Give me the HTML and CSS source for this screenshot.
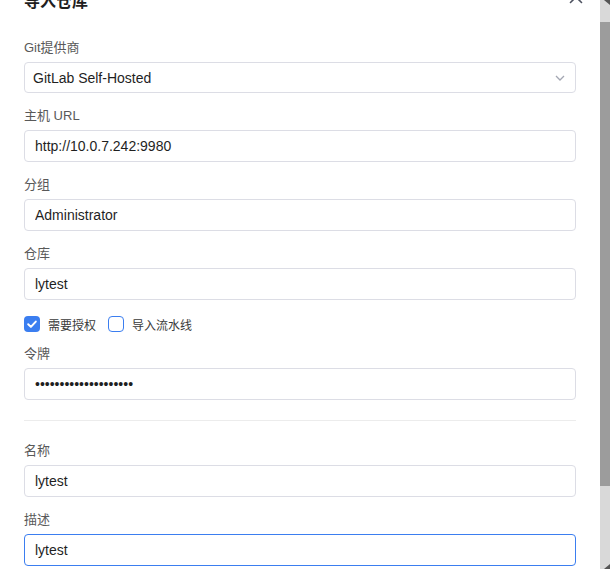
FILE: index.html
```html
<!DOCTYPE html>
<html lang="zh-CN">
<head>
  <meta charset="UTF-8">
  <meta name="viewport" content="width=device-width, initial-scale=1.0">
  <title>导入仓库</title>
  <link rel="stylesheet" href="styles.css">
</head>
<body>
  <div class="screen">
    <div class="dialog">
      <div class="dialog-header">
        <h2>导入仓库</h2>
        <button class="close-btn" type="button" aria-label="关闭">
          <svg width="14" height="14" viewBox="0 0 14 14"><path d="M1.5 1.5 L12.5 12.5 M12.5 1.5 L1.5 12.5" stroke="#4d5260" stroke-width="1.6" stroke-linecap="round" fill="none"/></svg>
        </button>
      </div>

      <form class="form">
        <div class="field">
          <label>Git提供商</label>
          <div class="select">
            <span>GitLab Self-Hosted</span>
            <svg width="12" height="8" viewBox="0 0 12 8"><path d="M2 2 L6 6 L10 2" stroke="#a3a6b2" stroke-width="1.3" fill="none"/></svg>
          </div>
        </div>

        <div class="field">
          <label>主机 URL</label>
          <input type="text" value="http://10.0.7.242:9980">
        </div>

        <div class="field">
          <label>分组</label>
          <input type="text" value="Administrator">
        </div>

        <div class="field">
          <label>仓库</label>
          <input type="text" value="lytest">
        </div>

        <div class="checks">
          <label class="check">
            <span class="box checked">
              <svg width="16" height="16" viewBox="0 0 16 16"><path d="M4.2 8.3 L6.9 10.9 L11.8 5.6" stroke="#fff" stroke-width="2" stroke-linecap="round" stroke-linejoin="round" fill="none"/></svg>
            </span>
            需要授权
          </label>
          <label class="check">
            <span class="box"></span>
            导入流水线
          </label>
        </div>

        <div class="field">
          <label>令牌</label>
          <input type="password" value="abcdefghijklmnopqrst">
        </div>

        <hr class="divider">

        <div class="field">
          <label>名称</label>
          <input type="text" value="lytest">
        </div>

        <div class="field">
          <label>描述</label>
          <input type="text" class="is-focused" value="lytest">
        </div>
      </form>
    </div>

    <div class="scrollbar">
      <div class="scroll-top"><span class="arrow-up"></span></div>
      <div class="scroll-thumb"></div>
      <div class="scroll-rest"><span class="arrow-down"></span></div>
    </div>
  </div>
</body>
</html>
```

FILE: styles.css
```css
:root {
  --text-main: #1f1f1f;
  --text-label: #595959;
  --border: #dcdde5;
  --primary: #3b7ef0;
  --divider: #ececec;
  --track: #d9d9d9;
  --thumb: #9c9c9c;
}

* {
  box-sizing: border-box;
}

body {
  margin: 0;
  background: #fff;
  font-family: 'Liberation Sans', 'Noto Sans CJK SC', sans-serif;
  color: var(--text-main);
}

.screen {
  display: flex;
  height: 569px;
  overflow: hidden;
}

.dialog {
  flex: 1;
  background: #fff;
  padding: 0 24px;
}

.dialog-header {
  display: flex;
  justify-content: space-between;
  align-items: flex-start;
  margin-top: -10px;
  margin-bottom: 23px;
  height: 24px;
}

.dialog-header h2 {
  margin: 0;
  font-size: 16px;
  line-height: 24px;
  font-weight: 700;
  color: var(--text-main);
}

.close-btn {
  border: none;
  background: none;
  padding: 0;
  margin: 0 -7px 0 0;
  width: 14px;
  height: 14px;
  display: flex;
}

.form {
  display: flex;
  flex-direction: column;
}

.field {
  display: flex;
  flex-direction: column;
  margin-bottom: 12px;
}

.field label {
  font-size: 13px;
  line-height: 21px;
  color: var(--text-label);
  margin-bottom: 4px;
}

.field input,
.select {
  height: 32px;
  border: 1px solid var(--border);
  border-radius: 4px;
  font-family: inherit;
  font-size: 14px;
  color: var(--text-main);
  background: #fff;
  outline: none;
}

.field input {
  padding: 0 10px;
}

.field input.is-focused {
  border-color: var(--primary);
}

.select {
  height: 31px;
  display: flex;
  align-items: center;
  justify-content: space-between;
  padding: 0 9px 0 8px;
}

.checks {
  display: flex;
  align-items: center;
  gap: 12px;
  height: 24px;
  margin-bottom: 7px;
}

.check {
  display: flex;
  align-items: center;
  gap: 8px;
  font-size: 12px;
  color: #3a3a3a;
}

.box {
  width: 16px;
  height: 16px;
  border: 1.5px solid var(--primary);
  border-radius: 4px;
  display: flex;
  align-items: center;
  justify-content: center;
}

.box.checked {
  background: var(--primary);
  border: none;
}

.divider {
  border: none;
  border-top: 1px solid var(--divider);
  margin: 8px 0 19px 0;
}

.scrollbar {
  width: 10px;
  background: var(--track);
  display: flex;
  flex-direction: column;
}

.scroll-top {
  height: 22px;
  display: flex;
  justify-content: flex-end;
}

.scroll-thumb {
  height: 464px;
  background: var(--thumb);
}

.scroll-rest {
  flex: 1;
  display: flex;
  justify-content: flex-end;
  align-items: flex-end;
}

.arrow-up {
  width: 0;
  height: 0;
  border-left: 6px solid transparent;
  border-top: 5px solid #555;
}

.arrow-down {
  width: 0;
  height: 0;
  border-left: 6px solid transparent;
  border-bottom: 5px solid #555;
}
```
